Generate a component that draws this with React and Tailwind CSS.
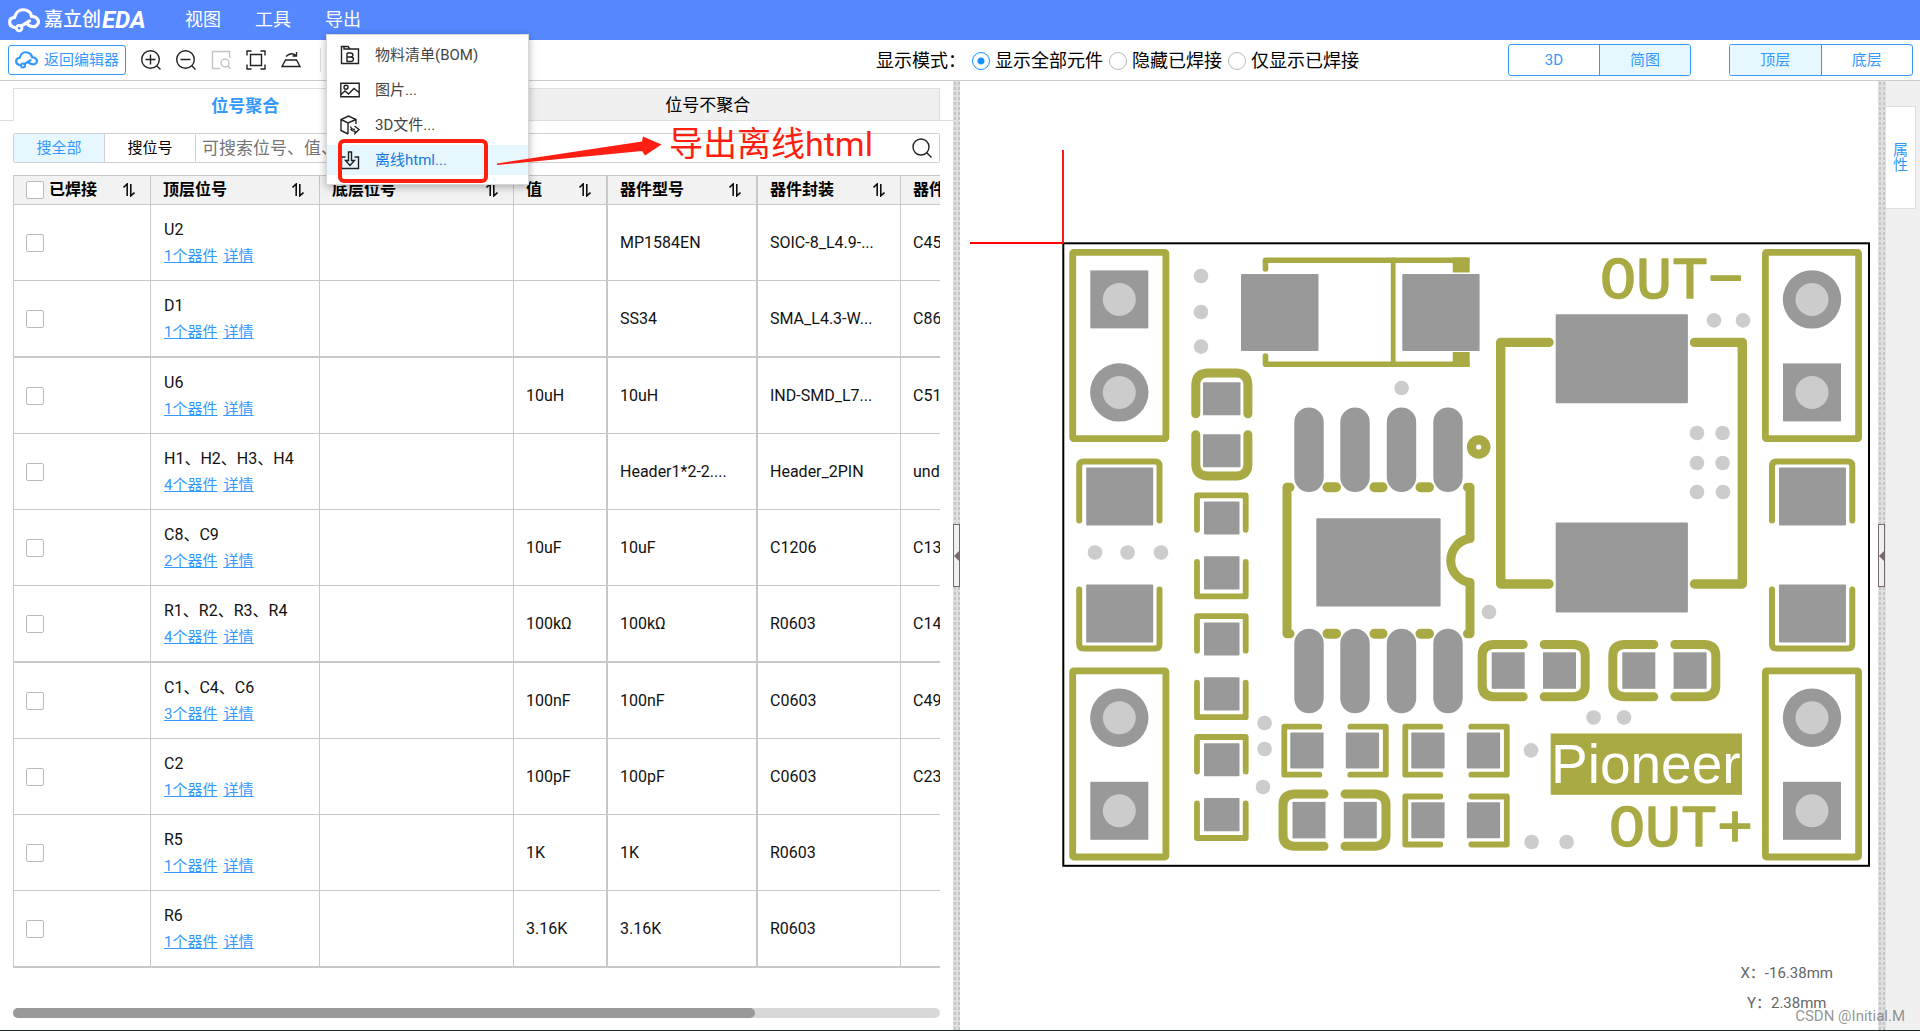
import React, { useState } from "react";

const SILK = "#a9aa43";
const PAD = "#999999";
const VIA = "#cccccc";

const parts = [
    { refs: "U2", count: 1, value: "", model: "MP1584EN", footprint: "SOIC-8_L4.9-...", code: "C45" },
    { refs: "D1", count: 1, value: "", model: "SS34", footprint: "SMA_L4.3-W...", code: "C86" },
    { refs: "U6", count: 1, value: "10uH", model: "10uH", footprint: "IND-SMD_L7...", code: "C51" },
    { refs: "H1、H2、H3、H4", count: 4, value: "", model: "Header1*2-2....", footprint: "Header_2PIN", code: "undefined" },
    { refs: "C8、C9", count: 2, value: "10uF", model: "10uF", footprint: "C1206", code: "C13" },
    { refs: "R1、R2、R3、R4", count: 4, value: "100kΩ", model: "100kΩ", footprint: "R0603", code: "C14" },
    { refs: "C1、C4、C6", count: 3, value: "100nF", model: "100nF", footprint: "C0603", code: "C49" },
    { refs: "C2", count: 1, value: "100pF", model: "100pF", footprint: "C0603", code: "C23" },
    { refs: "R5", count: 1, value: "1K", model: "1K", footprint: "R0603", code: "" },
    { refs: "R6", count: 1, value: "3.16K", model: "3.16K", footprint: "R0603", code: "" },
];

const vias = [
    [1201, 276], [1201, 312], [1201, 346.6], [1401.6, 388],
    [1095, 552.5], [1127.6, 552.5], [1161, 552.5],
    [1714, 320.4], [1743, 320.4],
    [1697, 433], [1722.6, 433], [1697, 463], [1722.6, 463], [1697, 492], [1723, 492],
    [1489, 612], [1264.6, 723], [1264.6, 749], [1263, 787],
    [1593.6, 717.5], [1624, 717.5], [1531, 750.4], [1531.6, 842], [1566.6, 842],
];

const CloudIcon = ({ className }) => (
    <svg viewBox="0 0 92 72" className={className} fill="none" stroke="currentColor" strokeWidth="9" strokeLinecap="round">
        <path d="M18 56C1 52-1 29 19 27C24 8 38 3 50 6C60 8 66 14 68 24C84 24 92 38 85 47C80 55 70 55 60 50L56 47" />
        <circle cx="32" cy="58" r="8" strokeWidth="8" />
        <path d="M38 52L62 37" />
    </svg>
);

const Icon = ({ children, className = "size-5" }) => (
    <svg viewBox="0 0 20 20" className={className} fill="none" stroke="currentColor" strokeWidth="1.4">
        {children}
    </svg>
);

const SortIcon = () => (
    <svg viewBox="0 0 12 14" className="h-[14px] w-3 shrink-0" fill="none" stroke="#111" strokeWidth="1.6">
        <path d="M0.5 4.5L4.2 1V13M7.8 1V12.8L11.5 9.5" />
    </svg>
);

const SearchIcon = () => (
    <Icon>
        <circle cx="9" cy="9" r="8" />
        <path d="M14.5 14.5L19.5 19.5" />
    </Icon>
);

const exportItems = [
    {
        label: "物料清单(BOM)",
        icon: (
            <Icon>
                <path d="M1.5 18.5V1.5H8L10 4H18.5V18.5ZM4 1.5V4H10" />
                <path d="M7 8H11Q13 8.200 13 10Q13 11.700 11 12H7M11 12Q13.500 12.200 13.500 14.200Q13.300 16.300 11 16.500H7V8" />
            </Icon>
        ),
    },
    {
        label: "图片...",
        icon: (
            <Icon>
                <path d="M0.800 3.200H19.200V16.800H0.800ZM1 14.500L5 11L8.500 14L14 8.500L19 12.500" />
                <circle cx="6" cy="7.200" r="2" />
            </Icon>
        ),
    },
    {
        label: "3D文件...",
        icon: (
            <Icon>
                <path d="M8 19L1 15.500V4.500L8.500 1L16 4.500V9M1 4.500L8 8L16 4.500M8 8V19" />
                <path d="M10.500 11.500Q11 14.500 15 14.500M14.500 11L19 14.500L15 18.500V16.500Q12 16.500 10.500 14" />
            </Icon>
        ),
    },
    {
        label: "离线html...",
        active: true,
        icon: (
            <Icon>
                <path d="M5.500 7H1.500V18.500H18.500V7H14.500M8.500 2H11.500V10.500H14.500L10 15.500L5.500 10.500H8.500Z" />
            </Icon>
        ),
    },
];

const Header = () => (
    <header className="flex h-10 shrink-0 items-center bg-[#5588ff] text-white">
        <h1 className="flex w-[173px] items-center pl-2">
            <CloudIcon className="h-[25px] w-8" />
            <span className="ml-1 text-[19px] font-medium leading-6">嘉立创</span>
            <span className="ml-px text-2xl font-bold italic leading-6">EDA</span>
        </h1>
        <nav className="flex text-lg leading-[42px]">
            <button className="w-[70px] pl-3 text-left">视图</button>
            <button className="w-[70px] pl-3 text-left">工具</button>
            <div className="relative">
                <button className="w-[70px] pl-3 text-left">导出</button>
                <ul className="absolute left-[13px] top-[35px] z-10 flex w-[203px] flex-col gap-[5px] border border-[#d8d8d8] bg-white pb-[9px] pt-[5px] text-[15px] leading-[30px] text-[#444] shadow-[0_2px_8px_rgba(0,0,0,0.3)]">
                    {exportItems.map((item) => (
                        <li key={item.label} className={item.active ? "bg-[#e6f7ff] text-[#1878dd]" : ""}>
                            <button className="flex w-full items-center pl-[13px]">
                                <span className="text-[#222]">{item.icon}</span>
                                <span className="ml-[15px] whitespace-nowrap">{item.label}</span>
                            </button>
                        </li>
                    ))}
                </ul>
            </div>
        </nav>
    </header>
);

const Toolbar = () => {
    const [mode, setMode] = useState("all");
    const modes = [
        ["all", "显示全部元件"],
        ["hide", "隐藏已焊接"],
        ["only", "仅显示已焊接"],
    ];

    return (
        <div className="flex h-[41px] shrink-0 items-center justify-between border-b border-[#ccc] bg-white pl-2 pr-[7px]">
            <div className="flex items-center">
                <button className="flex h-[30px] w-[118px] items-center gap-[6px] rounded-[3px] border border-[#3399ff] pl-[6px] text-[15px] text-[#3399ff]">
                    <CloudIcon className="h-[18px] w-[23px]" />
                    返回编辑器
                </button>
                <div className="ml-[15px] flex items-center gap-[15px] text-[#222]">
                    <button aria-label="放大">
                        <Icon>
                            <circle cx="9.500" cy="9.500" r="8.800" />
                            <path d="M16 16L19.500 19.500M4.500 9.500H14.500M9.500 4.500V14.500" />
                        </Icon>
                    </button>
                    <button aria-label="缩小">
                        <Icon>
                            <circle cx="9.500" cy="9.500" r="8.800" />
                            <path d="M16 16L19.500 19.500M4.500 9.500H14.500" />
                        </Icon>
                    </button>
                    <button aria-label="框选缩放" className="text-[#c4c4c4]">
                        <Icon>
                            <path d="M9 18.500H1.500V1.500H18.500V8" />
                            <circle cx="14" cy="13" r="4" />
                            <path d="M17 16L19.500 19" />
                        </Icon>
                    </button>
                    <button aria-label="适应画布">
                        <Icon>
                            <path d="M1 5.500V1H5.500M14.500 1H19V5.500M19 14.500V19H14.500M5.500 19H1V14.500M4.500 4.500H15.500V15.500H4.500Z" />
                        </Icon>
                    </button>
                    <button aria-label="翻转">
                        <Icon>
                            <path d="M4.500 10H15.500L19 16.500H1ZM5 6.500Q10 1.500 15 5.500M15.500 2V6H11.500" />
                        </Icon>
                    </button>
                    <span className="ml-1 h-6 w-px bg-[#ddd]" />
                </div>
            </div>
            <div className="flex items-center">
                <fieldset className="mr-[143px] flex items-center pt-[2px] text-lg leading-6 text-black">
                    <span className="mr-[6px]">显示模式：</span>
                    {modes.map(([key, label]) => (
                        <label key={key} className="mr-[6px] flex items-center gap-[5px]">
                            <input
                                type="radio"
                                name="mode"
                                checked={mode === key}
                                onChange={() => setMode(key)}
                                className="size-[18px] appearance-none rounded-full border border-[#bbb] checked:border-[#1890ff] checked:bg-[radial-gradient(circle,#1890ff_3px,transparent_4px)]"
                            />
                            {label}
                        </label>
                    ))}
                </fieldset>
                <div className="flex h-8 w-[183px] overflow-hidden rounded-[3px] border border-[#3399ff] text-[15px] text-[#3399ff]">
                    <button className="flex-1 border-r border-[#3399ff]">3D</button>
                    <button className="flex-1 bg-[#e6f7ff]">简图</button>
                </div>
                <div className="ml-[38px] flex h-8 w-[184px] overflow-hidden rounded-[3px] border border-[#3399ff] text-[15px] text-[#3399ff]">
                    <button className="flex-1 border-r border-[#3399ff] bg-[#e6f7ff]">顶层</button>
                    <button className="flex-1">底层</button>
                </div>
            </div>
        </div>
    );
};

const checkboxClass = "block size-[18px] shrink-0 appearance-none rounded-[2px] border border-[#bbb] bg-white checked:bg-[#3399ff]";

const HeadCell = ({ label, thick, first }) => (
    <th className={`h-[30px] border-y border-[#c8c8c8] bg-[#f2f2f2] p-0 font-bold text-black ${thick ? "border-r-2" : "border-r"} ${first ? "border-l" : ""}`}>
        <div className="flex items-center justify-between pl-3 pr-[15px]">
            {first ? (
                <label className="flex items-center gap-[5px]">
                    <input type="checkbox" className={checkboxClass} />
                    {label}
                </label>
            ) : (
                <span className="whitespace-nowrap">{label}</span>
            )}
            <SortIcon />
        </div>
    </th>
);

const PartsTable = () => (
    <table className="w-[1156px] table-fixed border-separate border-spacing-0 text-left text-base leading-5 text-[#111]">
        <colgroup>
            <col className="w-[138px]" />
            <col className="w-[169px]" />
            <col className="w-[194px]" />
            <col className="w-[94px]" />
            <col className="w-[150px]" />
            <col className="w-[143px]" />
            <col />
        </colgroup>
        <thead>
            <tr>
                <HeadCell label="已焊接" first />
                <HeadCell label="顶层位号" />
                <HeadCell label="底层位号" />
                <HeadCell label="值" thick />
                <HeadCell label="器件型号" thick />
                <HeadCell label="器件封装" />
                <HeadCell label="器件编号" />
            </tr>
        </thead>
        <tbody>
            {parts.map((part, i) => {
                // every fourth separator is drawn heavier
                const line = i % 4 === 1 ? "h-[77px] border-b-2" : "h-[76px] border-b";
                const cell = `border-[#c8c8c8] py-0 ${line}`;
                return (
                    <tr key={part.refs}>
                        <td className={`${cell} border-x px-3`}>
                            <input type="checkbox" aria-label={part.refs} className={checkboxClass} />
                        </td>
                        <td className={`${cell} border-r px-[13px]`}>
                            <div className="leading-[27px]">{part.refs}</div>
                            <div className="flex gap-[6px] text-[15px] leading-[26px] text-[#3399ff] underline">
                                <a href="#">{part.count}个器件</a>
                                <a href="#">详情</a>
                            </div>
                        </td>
                        <td className={`${cell} border-r px-3`}></td>
                        <td className={`${cell} border-r-2 px-3`}>{part.value}</td>
                        <td className={`${cell} border-r-2 px-3 whitespace-nowrap`}>{part.model}</td>
                        <td className={`${cell} border-r px-3 whitespace-nowrap`}>{part.footprint}</td>
                        <td className={`${cell} border-r px-3`}>{part.code}</td>
                    </tr>
                );
            })}
        </tbody>
    </table>
);

const PartsPanel = () => (
    <section className="flex min-w-0 flex-[953] flex-col bg-white pt-[7px]">
        <div className="flex h-[33px] shrink-0 border-b border-[#ddd] px-[13px] text-[17px] text-black">
            <button className="-mb-px flex-1 border-l border-t border-[#ddd] bg-white pt-1 font-bold text-[#3399ff]">位号聚合</button>
            <button className="flex-1 border-r border-t border-[#ddd] bg-[#f0f0f0] pt-[2px]">位号不聚合</button>
        </div>
        <div className="mx-[13px] mt-3 flex h-[30px] shrink-0">
            <div className="flex w-[183px] rounded-l-[2px] border border-[#d0d0d0] text-[15px]">
                <button className="flex-1 border-r border-[#d0d0d0] bg-[#e6f7ff] text-[#3399ff]">搜全部</button>
                <button className="flex-1 text-black">搜位号</button>
            </div>
            <div className="flex flex-1 items-center rounded-r-[2px] border border-l-0 border-[#d0d0d0] pr-[7px]">
                <input
                    type="text"
                    aria-label="搜索"
                    placeholder="可搜索位号、值、型号"
                    className="h-full min-w-0 flex-1 px-[6px] text-[17px] leading-6 outline-none placeholder:text-[#757575]"
                />
                <button aria-label="搜索" className="text-[#222]">
                    <SearchIcon />
                </button>
            </div>
        </div>
        <div className="mx-[13px] mt-3 min-h-0 flex-1 overflow-hidden">
            <PartsTable />
        </div>
        <div className="mx-[13px] mb-3 h-[10px] shrink-0 rounded-full bg-[#d8d8d8]">
            <div className="h-full w-4/5 rounded-full bg-[#999]" />
        </div>
    </section>
);

const Splitter = ({ className }) => (
    <div className={`flex shrink-0 items-center bg-[#dfdfdf] bg-[radial-gradient(#c6c6c6_1px,transparent_1px)] bg-[length:4px_5px] ${className}`}>
        <button aria-label="收起" className="flex h-[63px] w-[7px] items-center justify-end border border-[#776a6e] bg-[#f0f0f0]">
            <svg viewBox="0 0 5 10" className="h-[10px] w-[5px] shrink-0" fill="#776a6e">
                <path d="M5 0V10L0 5Z" />
            </svg>
        </button>
    </div>
);

/* ---- board drawing ---- */

const Pin = ({ x, y, round }) => (
    <g>
        {round ? <circle cx={x} cy={y} r="29.200" fill={PAD} /> : <rect x={x - 29} y={y - 29} width="58" height="58" fill={PAD} />}
        <circle cx={x} cy={y} r="16.500" fill={VIA} />
    </g>
);

const PinHeader = ({ x, y, roundFirst }) => (
    <g>
        <rect x={x + 3.4} y={y + 3.4} width="93.200" height="186.200" rx="1" fill="none" stroke={SILK} strokeWidth="6.800" strokeLinejoin="round" />
        <Pin x={x + 50} y={y + 50.4} round={roundFirst} />
        <Pin x={x + 50} y={y + 143.4} round={!roundFirst} />
    </g>
);

const BigCap = ({ x }) => (
    <g>
        <g fill="none" stroke={SILK} strokeWidth="6" strokeLinecap="round">
            <path d={`M${x + 3} 520.500V466Q${x + 3} 461.500 ${x + 7.5} 461.500H${x + 79}Q${x + 83.3} 461.500 ${x + 83.3} 466V520.500`} />
            <path d={`M${x + 3} 589.500V644Q${x + 3} 648.500 ${x + 7.5} 648.500H${x + 79}Q${x + 83.3} 648.500 ${x + 83.3} 644V589.500`} />
        </g>
        <rect x={x + 10} y="467.500" width="67" height="58" rx="1" fill={PAD} />
        <rect x={x + 10} y="584.500" width="67" height="58" rx="1" fill={PAD} />
    </g>
);

const VerticalResistor = ({ y }) => (
    <g>
        <g fill="none" stroke={SILK} strokeWidth="5.800" strokeLinecap="round" strokeLinejoin="round">
            <path d={`M1197 ${y + 37.5}V${y + 3}H1245.700V${y + 37.5}`} />
            <path d={`M1197 ${y + 69.5}V${y + 104}H1245.700V${y + 69.5}`} />
        </g>
        <rect x="1204" y={y + 9.3} width="35.500" height="33" rx="1" fill={PAD} />
        <rect x="1204" y={y + 64} width="35.500" height="33.300" rx="1" fill={PAD} />
    </g>
);

const FlatResistor = ({ x, y }) => (
    <g>
        <g fill="none" stroke={SILK} strokeWidth="5.800" strokeLinecap="round" strokeLinejoin="round">
            <path d={`M${x + 38} ${y + 3}H${x + 3}V${y + 51}H${x + 38}`} />
            <path d={`M${x + 69} ${y + 3}H${x + 104.5}V${y + 51}H${x + 69}`} />
        </g>
        <rect x={x + 9} y={y + 8.8} width="33.300" height="36" rx="1" fill={PAD} />
        <rect x={x + 64.5} y={y + 8.8} width="33.300" height="36" rx="1" fill={PAD} />
    </g>
);

const FlatCap = ({ x, y }) => (
    <g>
        <g fill="none" stroke={SILK} strokeWidth="9" strokeLinecap="round">
            <path d={`M${x + 45.5} ${y + 4.8}H${x + 15.5}Q${x + 4.5} ${y + 5.8} ${x + 4.5} ${y + 15.8}V${y + 46}Q${x + 4.5} ${y + 56} ${x + 15.5} ${y + 57}H${x + 45.5}`} />
            <path d={`M${x + 66.5} ${y + 4.8}H${x + 96.5}Q${x + 107.5} ${y + 5.8} ${x + 107.5} ${y + 15.8}V${y + 46}Q${x + 107.5} ${y + 56} ${x + 96.5} ${y + 57}H${x + 66.5}`} />
        </g>
        <rect x={x + 14} y={y + 12.6} width="33" height="36.500" fill={PAD} />
        <rect x={x + 65.3} y={y + 12.6} width="33" height="36.500" fill={PAD} />
    </g>
);

const Board = () => (
    <svg viewBox="960 81 918 949" className="block h-full w-full" role="img" aria-label="PCB">
        <rect x="1063.300" y="243.300" width="805.700" height="622.500" fill="#fff" stroke="#000" strokeWidth="2" />
        <path d="M970 243H1063V150" fill="none" stroke="#ff0000" strokeWidth="1.800" />

        <PinHeader x={1069.3} y={249} roundFirst={false} />
        <PinHeader x={1762} y={249} roundFirst />
        <PinHeader x={1069.3} y={667.4} roundFirst />
        <PinHeader x={1762} y={667.4} roundFirst />
        <BigCap x={1076.2} />
        <BigCap x={1769} />

        {/* D1 */}
        <g fill="none" stroke={SILK} strokeWidth="5.600" strokeLinecap="round" strokeLinejoin="round">
            <path d="M1265.500 269V260.200H1467M1265.500 356V364.200H1467" />
            <path d="M1393.200 260V364" strokeWidth="4.800" />
        </g>
        <path d="M1452.700 257.400H1469.700V272.400H1452.700ZM1452.700 352H1469.700V367H1452.700Z" fill={SILK} />
        <rect x="1241" y="274" width="77.500" height="77" rx="1" fill={PAD} />
        <rect x="1402.300" y="274" width="77.300" height="77" rx="1" fill={PAD} />

        {/* C1 */}
        <g fill="none" stroke={SILK} strokeWidth="9" strokeLinecap="round">
            <path d="M1195.800 413.800V384Q1196.500 373.500 1207 372.900H1237Q1247.200 373.500 1247.900 384V413.800" />
            <path d="M1195.800 434.800V465Q1196.500 475.300 1207 475.900H1237Q1247.200 475.300 1247.900 465V434.800" />
        </g>
        <rect x="1203" y="382.300" width="37.500" height="33" rx="1" fill={PAD} />
        <rect x="1203" y="434.300" width="37.500" height="33" rx="1" fill={PAD} />

        <VerticalResistor y={492.3} />
        <VerticalResistor y={613.2} />
        <VerticalResistor y={734} />

        {/* U2 */}
        <g fill="none" stroke={SILK} strokeWidth="9" strokeLinecap="round" strokeLinejoin="round">
            <path d="M1290 487.300H1287V633.700H1290" />
            <path d="M1467.500 487.300H1470V538.500A22.200 22.200 0 0 0 1470 582.500V633.700H1467.500" />
            <path d="M1327.500 487.300H1336M1374.500 487.300H1382.500M1420.500 487.300H1429M1327.500 633.700H1336M1374.500 633.700H1382.500M1420.500 633.700H1429" strokeWidth="10" />
            <circle cx="1478.700" cy="447" r="7.200" strokeWidth="9.200" />
        </g>
        {[1294.3, 1340.3, 1386.8, 1433.3].map((x) => (
            <g key={x} fill={PAD}>
                <rect x={x} y="407.500" width="29.400" height="84.500" rx="14.700" />
                <rect x={x} y="628.800" width="29.400" height="84.500" rx="14.700" />
            </g>
        ))}
        <rect x="1316.300" y="518.300" width="124.300" height="88.300" rx="1" fill={PAD} />

        {/* U6 */}
        <path d="M1549 342.400H1500.700V584H1549M1694.500 342.400H1742.300V584H1694.500" fill="none" stroke={SILK} strokeWidth="9.400" strokeLinecap="round" strokeLinejoin="round" />
        <rect x="1555.700" y="314.300" width="132.200" height="89" rx="1" fill={PAD} />
        <rect x="1555.700" y="522.500" width="132.200" height="90" rx="1" fill={PAD} />

        <FlatCap x={1477.7} y={639.7} />
        <FlatCap x={1608.3} y={639.7} />
        <FlatCap x={1278.5} y={789.3} />
        <FlatResistor x={1281.3} y={723.7} />
        <FlatResistor x={1402.3} y={723.7} />
        <FlatResistor x={1402.3} y={793.5} />

        {vias.map(([x, y]) => (
            <circle key={`${x}-${y}`} cx={x} cy={y} r="7.300" fill={VIA} />
        ))}

        <g fill={SILK} stroke={SILK} strokeWidth="1.500" strokeLinejoin="round" fontFamily="Liberation Mono, monospace" fontSize="60">
            <text x="1600" y="298">OUT−</text>
            <text x="1609" y="846">OUT+</text>
        </g>
        <rect x="1550.700" y="733.500" width="191.300" height="61.300" fill={SILK} />
        <text x="1551" y="783" fill="#fff" fontFamily="Liberation Sans, Arial, sans-serif" fontSize="55">Pioneer</text>
    </svg>
);

const BoardPane = () => (
    <section className="relative min-w-0 flex-[918] bg-white">
        <Board />
        <div className="absolute bottom-3 right-[45px] flex flex-col items-center text-[15px] leading-[30px] text-[#666]">
            <span>X：-16.38mm</span>
            <span>Y：2.38mm</span>
        </div>
    </section>
);

// red callout pointing at the offline html menu entry
const Callout = () => (
    <>
        <div className="absolute left-[338px] top-[139px] z-20 h-[44px] w-[150px] rounded-[6px] border-4 border-[#ff1f12]" />
        <div className="absolute left-[497px] top-[124px] z-20 flex items-start text-[#ff1f12]">
            <svg viewBox="0 0 166 42" className="h-[42px] w-[166px]" fill="currentColor">
                <path d="M0 39.500L145 17.500L146 12.500L164.500 20.500L148 31.500L145 27L0 41Z" />
            </svg>
            <span className="ml-[6px] whitespace-nowrap text-[34px] leading-10">导出离线html</span>
        </div>
    </>
);

export default function App() {
    return (
        <div className="relative flex h-screen flex-col overflow-hidden border-b border-[#1d2423] bg-white font-['Roboto','Noto_Sans_CJK_SC',sans-serif]">
            <Header />
            <Toolbar />
            <main className="flex min-h-0 flex-1">
                <PartsPanel />
                <Splitter className="w-[7px]" />
                <BoardPane />
                <Splitter className="w-2" />
                <aside className="w-[34px] shrink-0 bg-[#f0f0f0] pt-[25px]">
                    <button className="flex h-[103px] w-[30px] items-center justify-center border border-l-0 border-[#ddd] bg-white text-[15px] leading-[15px] text-[#3399ff]">
                        <span className="w-[15px]">属性</span>
                    </button>
                </aside>
            </main>
            <Callout />
            <div className="absolute bottom-1 right-[15px] text-[15px] leading-5 text-[#666]/70">CSDN @Initial.M</div>
        </div>
    );
}
